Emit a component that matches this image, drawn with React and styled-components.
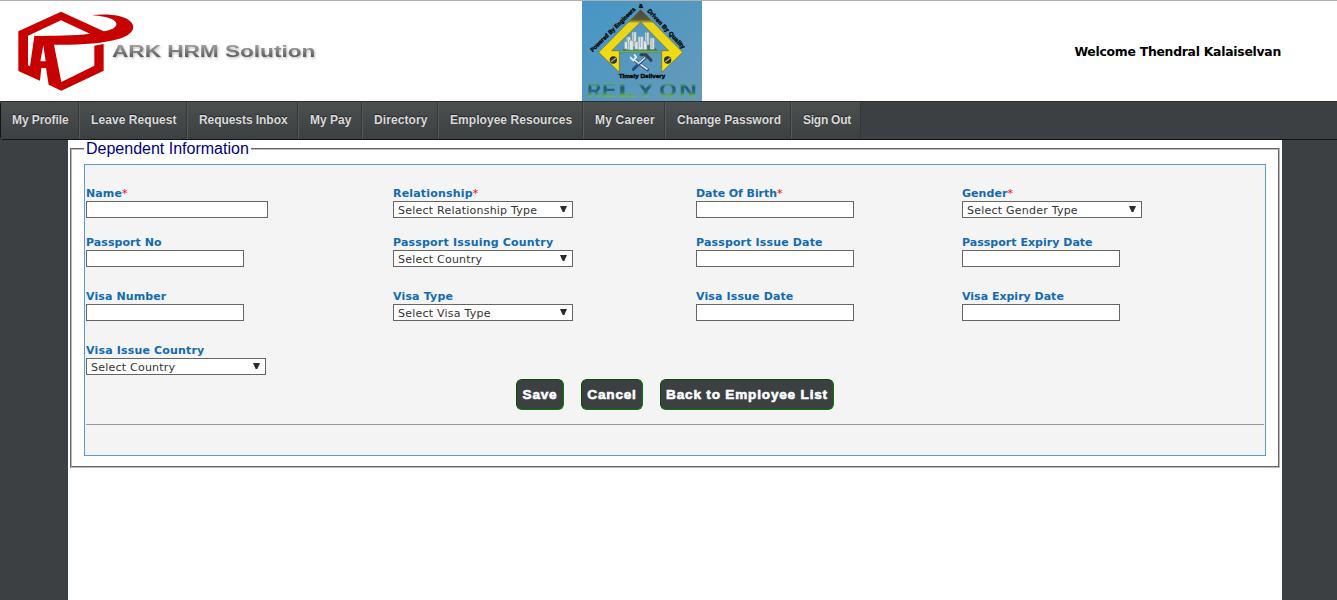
import React from "react";
import styled, { createGlobalStyle } from "styled-components";

const verdana = `Verdana, "DejaVu Sans", sans-serif`;
const arial = `Arial, "Liberation Sans", sans-serif`;

const GlobalStyle = createGlobalStyle`
  *, *::before, *::after { box-sizing: border-box; }
  html, body { margin: 0; background: #3c4042; overflow: hidden; }
`;

const Page = styled.div`
  display: flex;
  flex-direction: column;
  height: 600px;
`;

const Header = styled.header`
  display: flex;
  height: 101px;
  border-top: 1px solid #b0b0b0;
  background: #fff;
`;

const HeaderStart = styled.div`
  flex: 0 0 582px;
`;

const HeaderEnd = styled.div`
  flex: 1;
  display: flex;
  justify-content: flex-end;
  padding: 43px 56px 0 0;
`;

const Welcome = styled.span`
  font: bold 12.4px/16px ${verdana};
  letter-spacing: -0.26px;
  color: #000;
  white-space: nowrap;
`;

const Nav = styled.nav`
  display: flex;
  height: 39px;
  border: solid #111416;
  border-width: 1px 0 1px 1px;
  border-top-color: #292d2c;
  border-radius: 4px 0 0 4px;
  background: #3c4042;
`;

const NavItem = styled.a`
  flex: 0 0 ${(p) => p.$width}px;
  padding-left: 11px;
  border-left: ${(p) => (p.$first ? "0" : "1px solid #555958")};
  border-right: 1px solid #343839;
  background: linear-gradient(#4c4f4e, #3c4042);
  font: bold 12px/36px ${arial};
  letter-spacing: ${(p) => p.$spacing || 0}px;
  color: #dadada;
  text-shadow: 0 -1px 1px #202324;
  white-space: nowrap;
`;

const Content = styled.main`
  flex: 1;
  width: 1214px;
  margin-left: 68px;
  padding: 0 2px;
  background: #fff;
`;

const Fieldset = styled.fieldset`
  height: 328px;
  margin: 0;
  padding: 6px 12px 0;
  border: 2px groove #b9b9b9;
`;

const Legend = styled.legend`
  padding: 0 2px;
  font: 16px/18px ${arial};
  color: navy;
`;

const Panel = styled.div`
  height: 292px;
  padding: 21px 1px 0;
  border: 1px solid #5b9bd5;
  background: #f4f4f4;
`;

const FormRow = styled.div`
  display: grid;
  grid-template-columns: 307px 303px 266px 1fr;
  height: ${(p) => p.$height}px;
`;

const Field = styled.label`
  display: flex;
  flex-direction: column;
  align-items: flex-start;
`;

const LabelText = styled.span`
  font: bold 11px/15px ${verdana};
  letter-spacing: ${(p) => p.$spacing}px;
  color: #136bb0;
  white-space: nowrap;
`;

const Required = styled.span`
  font-weight: normal;
  color: red;
`;

const TextInput = styled.input`
  width: ${(p) => p.$width}px;
  height: 17px;
  padding: 0 4px;
  border: 1px solid #666;
  border-radius: 0;
  background: #fff;
  font: 11px ${verdana};
`;

const SelectBox = styled.span`
  display: flex;
  justify-content: space-between;
  width: 180px;
  height: 17px;
  padding: 0 5px 0 4px;
  border: 1px solid #666;
  background: #fff;
  font: 11px/17px ${verdana};
  letter-spacing: 0.23px;
  color: #333;
  white-space: nowrap;
`;

const Arrow = styled.svg`
  width: 7px;
  height: 6px;
  margin-top: 4px;
  fill: #2a2a2a;
`;

const Actions = styled.div`
  display: flex;
  gap: 17px;
  padding-left: 430px;
`;

const Button = styled.button`
  width: ${(p) => p.$width}px;
  height: 31px;
  padding: 0;
  border: 1px solid #008000;
  border-top-color: #005000;
  border-left-color: #005000;
  border-radius: 6px;
  background: #3c4042;
  font: 900 13.6px/18px ${arial};
  letter-spacing: ${(p) => p.$spacing}px;
  -webkit-text-stroke: 0.6px #fff;
  color: #fff;
  white-space: nowrap;
`;

const Divider = styled.hr`
  height: 1px;
  margin: 14px 0 0;
  border: 0;
  background: #999;
`;

const navItems = [
  ["My Profile", 78, -0.08],
  ["Leave Request", 108, 0.07],
  ["Requests Inbox", 111, -0.06],
  ["My Pay", 64, 0],
  ["Directory", 76, 0.08],
  ["Employee Resources", 145, 0.05],
  ["My Career", 82, 0.2],
  ["Change Password", 126, 0],
  ["Sign Out", 70, -0.25],
];

const rows = [
  {
    height: 49,
    fields: [
      { label: "Name", spacing: 0.1, required: true, width: 182 },
      { label: "Relationship", spacing: 0.18, required: true, select: "Select Relationship Type" },
      { label: "Date Of Birth", spacing: -0.06, required: true },
      { label: "Gender", spacing: 0.05, required: true, select: "Select Gender Type" },
    ],
  },
  {
    height: 54,
    fields: [
      { label: "Passport No", spacing: 0.06 },
      { label: "Passport Issuing Country", spacing: 0.19, select: "Select Country" },
      { label: "Passport Issue Date", spacing: 0.15 },
      { label: "Passport Expiry Date", spacing: 0.02 },
    ],
  },
  {
    height: 54,
    fields: [
      { label: "Visa Number", spacing: 0.1 },
      { label: "Visa Type", spacing: 0.16, select: "Select Visa Type" },
      { label: "Visa Issue Date", spacing: 0.13 },
      { label: "Visa Expiry Date", spacing: 0 },
    ],
  },
  { height: 36, fields: [{ label: "Visa Issue Country", spacing: 0.17, select: "Select Country" }] },
];

function ArkLogo() {
  return (
    <svg width="330" height="100" viewBox="0 3 990 300">
      <defs>
        <linearGradient id="arkText" x1="0" x2="0" y1="0" y2="1">
          <stop offset="0" stopColor="#aaa" />
          <stop offset="1" stopColor="#484848" />
        </linearGradient>
        <filter id="arkShadow" x="-5%" y="-20%" width="110%" height="150%">
          <feDropShadow dx="3" dy="4" stdDeviation="2.5" floodColor="#777" floodOpacity="0.5" />
        </filter>
      </defs>
      <path
        fill="#c80000"
        fillRule="evenodd"
        d="M183 35 L311 94 C348 88 360 71 339 59 C325 51 301 48 276 45 C323 40 370 45 389 62 C410 80 400 103 358 116 C311 131 230 135 162 134 L184 246 L283 197 V137 L311 132 V212 L184 272 L146 254 L138 204 H124 L120 242 L55 213 V94 Z M183 61 L84 107 V196 L90 199 L103 108 C165 107 222 107 270 101 Z M130 136 L121 184 H137 Z"
      />
      <text
        x="336" y="172" fontFamily="Arial, 'Liberation Sans', sans-serif" fontSize="48"
        fontWeight="bold" textLength="610" lengthAdjust="spacingAndGlyphs"
        fill="url(#arkText)" filter="url(#arkShadow)"
      >
        ARK HRM Solution
      </text>
    </svg>
  );
}

const brandLetters = [
  ["R", 14, 0.98],
  ["E", 58, 1.12],
  ["L", 107, 1.5],
  ["Y", 164, 1.3],
  ["O", 230, 1.15],
  ["N", 290, 1.25],
];

function RelyonLogo() {
  return (
    <svg width="120" height="100" viewBox="30 3 360 300">
      <defs>
        <linearGradient id="sky" x1="0" y1="0" x2="1" y2="1">
          <stop offset="0" stopColor="#4596c6" />
          <stop offset="1" stopColor="#669ab8" />
        </linearGradient>
        <linearGradient id="gold" x1="0" y1="0" x2="0" y2="1">
          <stop offset="0" stopColor="#484540" />
          <stop offset="0.16" stopColor="#5c5838" />
          <stop offset="0.22" stopColor="#e8d51d" />
          <stop offset="1" stopColor="#f2df13" />
        </linearGradient>
        <linearGradient id="brand" gradientUnits="userSpaceOnUse" x1="0" y1="-42" x2="0" y2="0">
          <stop offset="0" stopColor="#62a878" />
          <stop offset="0.3" stopColor="#1c5a80" />
          <stop offset="0.6" stopColor="#286c70" />
          <stop offset="0.9" stopColor="#6fb052" />
        </linearGradient>
        <path id="leftArc" d="M62 157 L194 27" />
        <path id="rightArc" d="M225 34 L334 150" />
      </defs>
      <rect x="30" y="3" width="360" height="300" fill="url(#sky)" />
      <path
        d="M206 29 L332 157 L269 217 V152 H290 L206 66 L119 152 H142 V217 L80 157 Z"
        fill="url(#gold)" stroke="#6b6a1c" strokeWidth="2"
      />
      <path d="M165 135 H242 L263 158 H145 Z" fill="#456d5b" />
      <path d="M145 155 H263" stroke="#68b653" strokeWidth="5" />
      <g fill="#dce7e8" stroke="#809ba4" strokeWidth="2">
        <path d="M163 111 h13 v38 h-13 z M180 96 h13 v43 h-13 z M198 110 h16 v39 h-16 z M219 97 h12 v38 h-12 z M234 114 h13 v34 h-13 z" />
        <path d="M157 125 h10 v22 h-10 z M172 121 h12 v29 h-12 z M188 125 h10 v23 h-10 z M214 123 h11 v26 h-11 z" />
      </g>
      <path d="M167 112 V146 M185 98 V133 M205 112 V142 M224 99 V132 M240 117 V145" stroke="#9aadb1" strokeWidth="3" />
      <g strokeLinecap="round" fill="none">
        <path d="M187 180 L226 209" stroke="#344f70" strokeWidth="10" />
        <path d="M187 180 L225 207" stroke="#dae4ec" strokeWidth="5" />
        <path d="M176 173 L184 181 L192 172 L188 165" stroke="#e4edf1" strokeWidth="6" />
        <path d="M219 174 L184 208" stroke="#244d80" strokeWidth="9" />
        <path d="M218 174 L199 191" stroke="#d5dce0" strokeWidth="5" />
        <path d="M207 164 H222 L237 181" stroke="#34414d" strokeWidth="9" />
      </g>
      {[124, 287].map((x) => (
        <g key={x}>
          <circle cx={x} cy="180" r="11" fill="#34311d" />
          <path d={`M${x - 7} 185 L${x + 8} 174`} stroke="#b7b2a4" strokeWidth="4" />
        </g>
      ))}
      <g fontFamily="Arial, 'Liberation Sans', sans-serif" fontWeight="900" fill="#050b0e" stroke="#050b0e" strokeWidth="1.2">
        <text fontSize="18">
          <textPath href="#leftArc" textLength="182" lengthAdjust="spacingAndGlyphs">Powered By Engineers</textPath>
        </text>
        <text x="200" y="25" fontSize="18">&amp;</text>
        <text fontSize="18">
          <textPath href="#rightArc" textLength="156" lengthAdjust="spacing">Driven By Quality</textPath>
        </text>
        <text x="140" y="234" fontSize="17" textLength="140" lengthAdjust="spacingAndGlyphs">Timely Delivery</text>
      </g>
      <g fontFamily="Arial, 'Liberation Sans', sans-serif" fontSize="58" fontWeight="bold" fill="url(#brand)">
        {brandLetters.map(([letter, x, stretch]) => (
          <text key={letter} transform={`translate(${x + 32} 292) scale(${stretch} 1)`}>{letter}</text>
        ))}
      </g>
    </svg>
  );
}

function FormField({ label, spacing, required, select, width = 158 }) {
  return (
    <Field>
      <LabelText $spacing={spacing}>
        {label}
        {required && <Required>*</Required>}
      </LabelText>
      {select ? (
        <SelectBox>
          {select}
          <Arrow viewBox="0 0 7 6"><path d="M0 0H7L4.3 6H2.7Z" /></Arrow>
        </SelectBox>
      ) : (
        <TextInput $width={width} aria-label={label} />
      )}
    </Field>
  );
}

export default function App() {
  return (
    <Page>
      <GlobalStyle />
      <Header>
        <HeaderStart><ArkLogo /></HeaderStart>
        <RelyonLogo />
        <HeaderEnd><Welcome>Welcome Thendral Kalaiselvan</Welcome></HeaderEnd>
      </Header>
      <Nav>
        {navItems.map(([name, width, spacing], i) => (
          <NavItem key={name} $width={width} $spacing={spacing} $first={i === 0}>{name}</NavItem>
        ))}
      </Nav>
      <Content>
        <Fieldset>
          <Legend>Dependent Information</Legend>
          <Panel>
            {rows.map((row, i) => (
              <FormRow key={i} $height={row.height}>
                {row.fields.map((field) => <FormField key={field.label} {...field} />)}
              </FormRow>
            ))}
            <Actions>
              <Button $width={48} $spacing={0.8}>Save</Button>
              <Button $width={62} $spacing={0.8}>Cancel</Button>
              <Button $width={174} $spacing={0.8}>Back to Employee List</Button>
            </Actions>
            <Divider />
          </Panel>
        </Fieldset>
      </Content>
    </Page>
  );
}
